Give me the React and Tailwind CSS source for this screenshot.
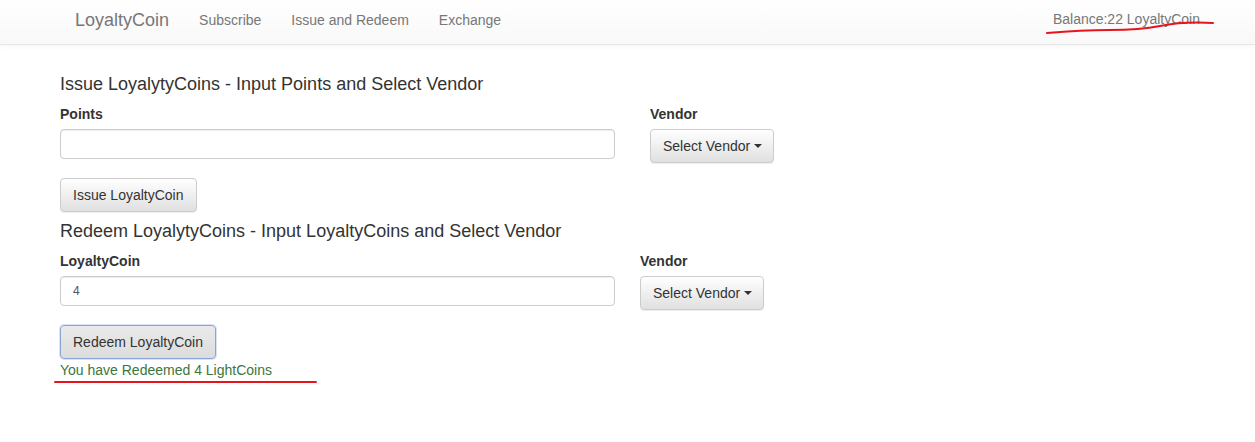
import React, { useState } from "react";

const font = { fontFamily: '"Liberation Sans", Arial, sans-serif' };

function VendorButton() {
  return (
    <button className="h-[34px] pl-3 pr-[11px] rounded-[4px] border border-[#cccccc] bg-gradient-to-b from-white to-[#e0e0e0] text-[14px] text-[#333] shadow-[inset_0_1px_0_rgba(255,255,255,0.15),0_1px_1px_rgba(0,0,0,0.075)] flex items-center gap-1">
      Select Vendor
      <span className="inline-block w-0 h-0 border-l-4 border-r-4 border-t-4 border-l-transparent border-r-transparent border-t-[#333]" />
    </button>
  );
}

export default function App() {
  const [points, setPoints] = useState("");
  const [coins, setCoins] = useState("4");

  return (
    <div className="relative min-h-[442px] bg-white text-[#333]" style={font}>
      {/* navbar */}
      <nav className="h-[45px] pb-[4px] border-b border-[#e7e7e7] bg-gradient-to-b from-white to-[#f8f8f8] shadow-[0_1px_5px_rgba(0,0,0,0.05)] flex items-center px-[60px]">
        <a className="px-[15px] text-[18px] text-[#777]">LoyaltyCoin</a>
        <a className="px-[15px] text-[14px] text-[#777]">Subscribe</a>
        <a className="px-[15px] text-[14px] text-[#777]">Issue and Redeem</a>
        <a className="px-[15px] text-[14px] text-[#777]">Exchange</a>
        <a className="ml-auto pr-[15px] -mt-[2px] text-[14px] text-[#777] mr-[-20px]">Balance:22 LoyaltyCoin</a>
      </nav>

      <div className="pl-[60px]">
        {/* issue */}
        <h3 className="mt-[29px] text-[18px] leading-[20px]">Issue LoyalytyCoins - Input Points and Select Vendor</h3>
        <div className="flex gap-[35px] mt-[10px]">
          <div className="w-[555px]">
            <label className="block text-[14px] font-bold leading-[20px]">Points</label>
            <input
              value={points}
              onChange={(e) => setPoints(e.target.value)}
              className="mt-[5px] w-full h-[30px] rounded-[4px] border border-[#cccccc] px-3 text-[12px] shadow-[inset_0_1px_1px_rgba(0,0,0,0.075)] outline-none"
            />
          </div>
          <div>
            <label className="block text-[14px] font-bold leading-[20px]">Vendor</label>
            <div className="mt-[5px]">
              <VendorButton />
            </div>
          </div>
        </div>
        <button className="mt-[15px] h-[34px] px-3 rounded-[4px] border border-[#cccccc] bg-gradient-to-b from-white to-[#e0e0e0] text-[14px] text-[#333] shadow-[0_1px_1px_rgba(0,0,0,0.075)]">
          Issue LoyaltyCoin
        </button>

        {/* redeem */}
        <h3 className="mt-[9px] text-[18px] leading-[20px]">Redeem LoyalytyCoins - Input LoyaltyCoins and Select Vendor</h3>
        <div className="flex gap-[25px] mt-[10px]">
          <div className="w-[555px]">
            <label className="block text-[14px] font-bold leading-[20px]">LoyaltyCoin</label>
            <input
              value={coins}
              onChange={(e) => setCoins(e.target.value)}
              className="mt-[5px] w-full h-[30px] rounded-[4px] border border-[#cccccc] px-3 text-[12px] text-[#555] shadow-[inset_0_1px_1px_rgba(0,0,0,0.075)] outline-none"
            />
          </div>
          <div>
            <label className="block text-[14px] font-bold leading-[20px]">Vendor</label>
            <div className="mt-[5px]">
              <VendorButton />
            </div>
          </div>
        </div>
        <button className="mt-[15px] h-[34px] px-3 rounded-[4px] border border-[#8aa4d8] bg-gradient-to-b from-[#eaeaea] to-[#dcdcdc] text-[14px] text-[#333] shadow-[0_0_0_1px_rgba(102,140,220,0.25)]">
          Redeem LoyaltyCoin
        </button>
        <p className="mt-[1px] text-[14px] leading-[20px] text-[#3c763d]">You have Redeemed 4 LightCoins</p>
      </div>

      {/* hand-drawn red marks */}
      <svg className="absolute left-0 top-0 pointer-events-none" width="1255" height="442">
        <path d="M1047 33 C1070 31 1090 30 1110 30 C1130 30 1145 29 1160 26 C1175 23 1195 22 1213 23" fill="none" stroke="#e8141c" strokeWidth="2" strokeLinecap="round" />
        <path d="M55 382 L316 382" fill="none" stroke="#e8141c" strokeWidth="2" strokeLinecap="round" />
      </svg>
    </div>
  );
}
